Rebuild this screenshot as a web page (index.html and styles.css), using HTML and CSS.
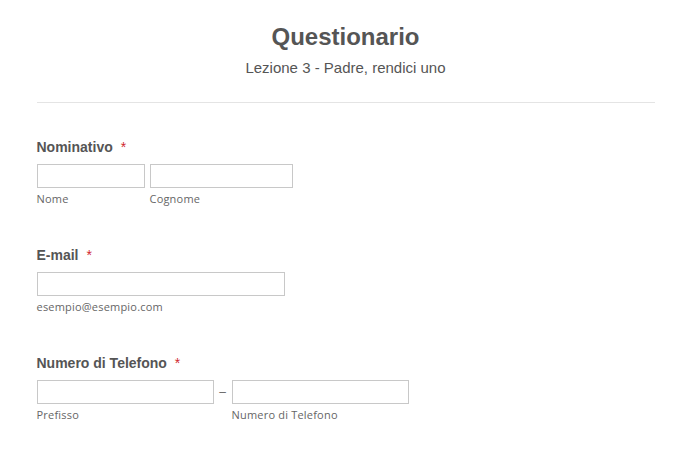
FILE: index.html
```html
<!DOCTYPE html>
<html>

<head>
    <title>Questionario</title>
    <meta charset="UTF-8">
    <meta name="viewport" content="width=device-width, initial-scale=1.0">
    <link rel="stylesheet" href="styles.css">
</head>

<body>
    <form class="form">
        <div class="form-header">
            <h1 class="form-title">Questionario</h1>
            <p class="form-subtitle">Lezione 3 - Padre, rendici uno</p>
        </div>

        <div class="field">
            <label class="field-label">Nominativo <span class="required">*</span></label>
            <div class="field-row">
                <div class="sub">
                    <input type="text" class="input input-nome">
                    <span class="sublabel">Nome</span>
                </div>
                <div class="sub">
                    <input type="text" class="input input-cognome">
                    <span class="sublabel">Cognome</span>
                </div>
            </div>
        </div>

        <div class="field">
            <label class="field-label">E-mail <span class="required">*</span></label>
            <div class="field-row">
                <div class="sub">
                    <input type="email" class="input input-email">
                    <span class="sublabel">esempio@esempio.com</span>
                </div>
            </div>
        </div>

        <div class="field">
            <label class="field-label">Numero di Telefono <span class="required">*</span></label>
            <div class="field-row">
                <div class="sub">
                    <input type="text" class="input input-phone">
                    <span class="sublabel">Prefisso</span>
                </div>
                <span class="dash">–</span>
                <div class="sub">
                    <input type="text" class="input input-phone">
                    <span class="sublabel">Numero di Telefono</span>
                </div>
            </div>
        </div>
    </form>
</body>

</html>
```

FILE: styles.css
```css
body {
    margin: 0;
    font-family: "Liberation Sans", Arial, sans-serif;
    background-color: #fff;
    color: #555;
}

.form {
    max-width: 618px;
    margin: 0 auto;
}

.form-header {
    text-align: center;
    padding-top: 22px;
    padding-bottom: 24px;
    border-bottom: 1px solid #e4e4e4;
}

.form-title {
    margin: 0;
    font-size: 24px;
    line-height: 30px;
    font-weight: bold;
    color: #555;
}

.form-subtitle {
    margin: 6px 0 0;
    font-size: 15px;
    line-height: 20px;
    color: #555;
}

.field {
    display: flex;
    flex-direction: column;
    margin-top: 35px;
}

.field + .field {
    margin-top: 40px;
}

.field-label {
    font-size: 14px;
    line-height: 18px;
    font-weight: bold;
    color: #555;
    margin-bottom: 8px;
}

.required {
    color: #d0262f;
    font-weight: normal;
    margin-left: 4px;
}

.field-row {
    display: flex;
    align-items: flex-start;
    gap: 5px;
}

.sub {
    display: flex;
    flex-direction: column;
}

.input {
    box-sizing: border-box;
    height: 24px;
    margin: 0;
    border: 1px solid #c8c8c8;
    background-color: #fff;
    padding: 2px 4px;
}

.input-nome {
    width: 108px;
}

.input-cognome {
    width: 143px;
}

.input-email {
    width: 248px;
}

.input-phone {
    width: 177px;
}

.dash {
    width: 8px;
    text-align: center;
    font-size: 12px;
    line-height: 24px;
    color: #666;
}

.sublabel {
    margin-top: 4px;
    font-family: "Open Sans", "DejaVu Sans", sans-serif;
    font-size: 11px;
    line-height: 14px;
    letter-spacing: 0.2px;
    color: #666;
}
```
